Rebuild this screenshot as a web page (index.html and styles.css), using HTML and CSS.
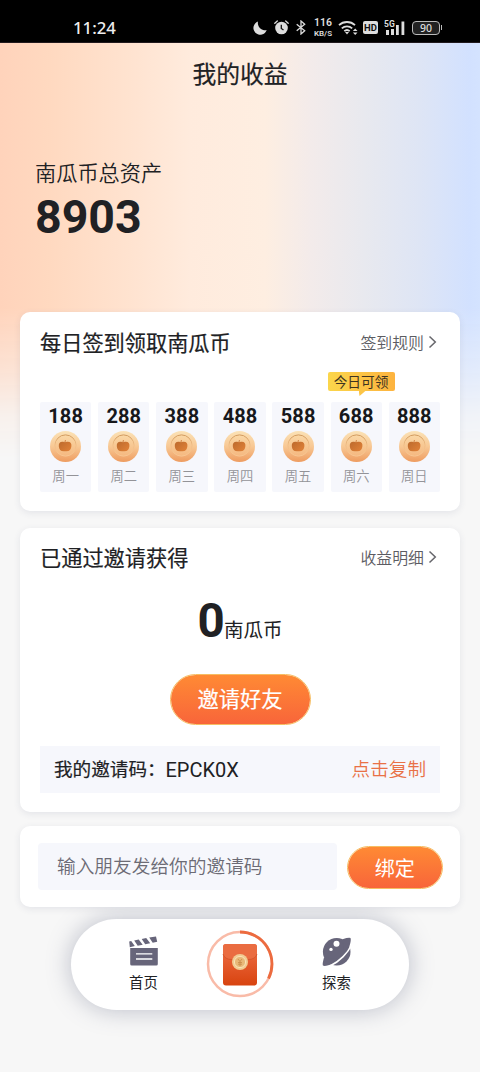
FILE: index.html
```html
<!DOCTYPE html>
<html lang="zh-CN">
<head>
<meta charset="utf-8">
<title>我的收益</title>
<link rel="stylesheet" href="styles.css">
</head>
<body>
<svg class="defs" width="0" height="0" aria-hidden="true">
  <defs>
    <linearGradient id="coinFill" x1="0" y1="0" x2="0" y2="1"><stop offset="0" stop-color="#fbe2b6"/><stop offset=".5" stop-color="#f8c894"/><stop offset="1" stop-color="#ee9c60"/></linearGradient>
    <linearGradient id="coinInner" x1="0" y1="0" x2="0" y2="1"><stop offset="0" stop-color="#fad8a6"/><stop offset="1" stop-color="#f5b880"/></linearGradient>
    <linearGradient id="coinRim" x1="0" y1="0" x2="0" y2="1"><stop offset="0" stop-color="#d09a5e"/><stop offset=".45" stop-color="#efbd86"/><stop offset="1" stop-color="#f8c692"/></linearGradient>
    <linearGradient id="pumpkin" x1="0" y1="0" x2="1" y2="1"><stop offset="0" stop-color="#b9682c"/><stop offset="1" stop-color="#e28238"/></linearGradient>
    <symbol id="coin" viewBox="0 0 31 31">
      <circle cx="15.5" cy="15.5" r="15.5" fill="url(#coinFill)"/>
      <circle cx="15.5" cy="14.500" r="10.600" fill="url(#coinInner)" stroke="url(#coinRim)" stroke-width="1"/>
      <path d="M14.600 11.200c-.1-.9.100-1.700.5-2.200l.8.300c-.4.5-.5 1.100-.4 1.900 4.500-1.200 6.200.8 5.900 4-.3 3.500-2.200 5.600-6.300 5-4.200.6-6.100-1.500-6.300-5-.2-3.200 1.500-5.200 5.800-4z" fill="url(#pumpkin)"/>
    </symbol>
  </defs>
</svg>
<div class="phone">
  <header class="status">
    <span class="clock">11:24</span>
    <svg class="moon" width="14" height="14" viewBox="0 0 14 14"><path d="M5 .5A6.800 6.800 0 1 0 13.700 9 7.200 7.200 0 0 1 5 .5z" fill="#ddd"/></svg>
    <svg class="alarm" width="15" height="15" viewBox="0 0 15 15"><circle cx="7.500" cy="8" r="6.300" fill="#ddd"/><path d="M.8 3.200L3.300 1M14.200 3.200L11.700 1" stroke="#ddd" stroke-width="1.300" stroke-linecap="round"/><path d="M7.300 4.800v3.700l2.200 1.500" fill="none" stroke="#111" stroke-width="1.300"/></svg>
    <svg class="bt" width="10" height="15" viewBox="0 0 10 15"><path d="M.7 4.200l8 6.600L5 14V1l3.700 3.200-8 6.600" fill="none" stroke="#ddd" stroke-width="1.300"/></svg>
    <span class="speed"><b>116</b><i>KB/S</i></span>
    <svg class="wifi" width="20" height="15" viewBox="0 0 20 15"><path d="M1 5.200a11.600 11.600 0 0 1 16 0M3.800 8.300a7.700 7.700 0 0 1 10.400 0M6.300 11.200a4 4 0 0 1 5.400 0" fill="none" stroke="#ddd" stroke-width="1.800"/><path d="M7 12h4l-2 2.500z" fill="#ddd"/><path d="M17.200 8.500l2.300 2.500h-4.600zM17.200 15l2.300-2.500h-4.600z" fill="#ddd"/></svg>
    <span class="hd">HD</span>
    <svg class="signal" width="21" height="16" viewBox="0 0 21 16"><g fill="#ddd"><rect x="2" y="10" width="3" height="5"/><rect x="7" y="9" width="3" height="6"/><rect x="12" y="5" width="2.800" height="10"/><rect x="17.500" y="1.500" width="2.800" height="13.500"/></g><text x="0" y="7.300">5G</text></svg>
    <span class="battery">90</span>
  </header>
  <div class="backdrop"></div>
  <h1 class="title">我的收益</h1>
  <section class="assets">
    <div class="assets-label">南瓜币总资产</div>
    <div class="assets-value">8903</div>
  </section>
  <main class="cards">
    <section class="card checkin">
      <div class="card-head"><h2>每日签到领取南瓜币</h2><a class="more">签到规则<svg width="9" height="14" viewBox="0 0 9 14"><path d="M1.500 1.500L7.300 7l-5.800 5.500"/></svg></a></div>
      <div class="days">
        <div class="day"><b>188</b><svg class="coin"><use href="#coin"/></svg><span>周一</span></div>
        <div class="day"><b>288</b><svg class="coin"><use href="#coin"/></svg><span>周二</span></div>
        <div class="day"><b>388</b><svg class="coin"><use href="#coin"/></svg><span>周三</span></div>
        <div class="day"><b>488</b><svg class="coin"><use href="#coin"/></svg><span>周四</span></div>
        <div class="day"><b>588</b><svg class="coin"><use href="#coin"/></svg><span>周五</span></div>
        <div class="day"><em class="tip">今日可领</em><b>688</b><svg class="coin"><use href="#coin"/></svg><span>周六</span></div>
        <div class="day"><b>888</b><svg class="coin"><use href="#coin"/></svg><span>周日</span></div>
      </div>
    </section>
    <section class="card invite">
      <div class="card-head"><h2>已通过邀请获得</h2><a class="more">收益明细<svg width="9" height="14" viewBox="0 0 9 14"><path d="M1.500 1.500L7.300 7l-5.800 5.500"/></svg></a></div>
      <div class="earned"><b>0</b><span>南瓜币</span></div>
      <button class="pill invite-btn">邀请好友</button>
      <div class="code"><span class="code-label">我的邀请码：</span><span class="code-value">EPCK0X</span><a class="copy">点击复制</a></div>
    </section>
    <section class="card bind">
      <div class="field">输入朋友发给你的邀请码</div>
      <button class="pill bind-btn">绑定</button>
    </section>
  </main>
  <nav class="tabs">
    <a class="tab">
      <svg width="30" height="30" viewBox="0 0 30 30"><path d="M1.200 11h27.600V27q0 1.500-1.500 1.500H2.700q-1.500 0-1.500-1.500z" fill="#67657a"/><path d="M.2 4.500l2-.4L5.800 9l-5 1.200zM5.200 3.500l4.500-.9 4 5.200-5 1zM12.700 2l4.500-.9 4 5.200-5 1zM20.200.6L27 -.6l1.200 5.400-4.500.9z" fill="#67657a"/><path d="M7 16.800h16.300M7 22h16.300" stroke="#fff" stroke-width="1.300"/></svg>
      <span>首页</span>
    </a>
    <a class="wallet">
      <svg width="68" height="68" viewBox="0 0 68 68">
        <defs><linearGradient id="packet" x1="0" y1="0" x2="0" y2="1"><stop offset="0" stop-color="#ef7048"/><stop offset="1" stop-color="#d8430f"/></linearGradient></defs>
        <circle cx="34" cy="34" r="32" fill="none" stroke="#f9bba8" stroke-width="2.500"/>
        <path d="M34 2A32 32 0 0 1 62.500 48.500" fill="none" stroke="#ec6b3f" stroke-width="2.800"/>
        <rect x="17" y="14" width="34" height="41.500" rx="3" fill="url(#packet)"/>
        <path d="M17 17q0-3 3-3h28q3 0 3 3v7q-1.500 5.500-9 5.500H26q-7.500 0-9-5.500z" fill="#ea6c41"/>
        <path d="M17 24q1.500 5.500 9 5.500h16q7.500 0 9-5.500" fill="none" stroke="#cf5329" stroke-width=".8"/>
        <circle cx="34" cy="32" r="8" fill="#f1cb92"/><circle cx="34" cy="32" r="5.600" fill="#e8b878" stroke="#fae3b8" stroke-width="1"/>
        <path d="M32 29l2 2.500 2-2.500M34 31.500V36M32 32.500h4M32 34.200h4" fill="none" stroke="#c88a4a" stroke-width=".8"/>
      </svg>
    </a>
    <a class="tab">
      <svg width="30" height="30" viewBox="0 0 30 30"><circle cx="14.700" cy="14.700" r="13.800" fill="#67657a"/><path d="M20.500 2.200Q26.500.4 28.500 1q.9 2.200-1 8L22 15zM2 20.500Q.2 26.800.9 28.600q2.200.9 8-1L15 22z" fill="#67657a"/><path d="M29.500 8C26 15.500 18 24.500 7.500 29.300" fill="none" stroke="#fff" stroke-width="1.600"/><circle cx="14.500" cy="6.800" r="3" fill="#fff"/><circle cx="9" cy="12.400" r="1.700" fill="#fff"/></svg>
      <span>探索</span>
    </a>
  </nav>
</div>
</body>
</html>
```
FILE: styles.css
```css
* { box-sizing: border-box; }
body { margin: 0; background: #f7f7f7; color: #202124; font-family: Roboto, "Noto Sans CJK SC", sans-serif; }
h1, h2 { margin: 0; font-weight: 400; -webkit-text-stroke: .2px currentColor; }
button { border: 0; font-family: inherit; padding: 0; }
.defs { position: absolute; }
.phone { position: relative; isolation: isolate; width: 480px; height: 1072px; overflow: hidden; background: #f7f7f7; }

.status { height: 43px; background: #000; display: flex; align-items: center; padding: 13px 0 0 73px; color: #ddd; border-bottom: 1px solid #211a1e; }
.clock { width: 180px; font: 500 16.800px/20px "Noto Sans", sans-serif; color: #eee; }
.moon { margin-right: 7px; }
.alarm { margin-right: 7px; }
.bt { margin-right: 7px; }
.speed { display: flex; flex-direction: column; align-items: center; gap: 1px; width: 20px; font-family: Roboto, sans-serif; margin-right: 5px; }
.speed b { font-size: 10.500px; line-height: 10px; font-weight: 600; }
.speed i { font-style: normal; font-size: 8px; line-height: 9px; font-weight: 600; }
.wifi { margin-right: 5px; }
.hd { width: 15px; height: 13px; border-radius: 2px; background: #ddd; color: #111; font: 700 9.500px/13px Roboto, sans-serif; text-align: center; margin-right: 6px; }
.signal { margin-right: 7px; }
.signal text { font: 700 8.500px Roboto, sans-serif; fill: #ddd; }
.battery { position: relative; width: 28px; height: 14px; border: 1.500px solid #bbb; border-radius: 4px; background: #222; font: 500 10.500px/12px "Noto Sans", sans-serif; text-align: center; color: #ddd; }
.battery::after { content: ""; position: absolute; right: -3px; top: 3px; width: 1.500px; height: 5px; background: #bbb; }

.backdrop { position: absolute; z-index: -1; left: 0; top: 43px; width: 480px; height: 420px; background: linear-gradient(90deg, #ffd3bb 0, #ffd9c0 50px, #ffe3d0 130px, #ffebdd 190px, #feeee1 265px, #f3ebea 310px, #e8e9ef 365px, #dee5f5 420px, #d2e1ff 470px, #d4e3ff 480px); -webkit-mask-image: linear-gradient(#000 0, #000 265px, rgba(0,0,0,.6) 325px, rgba(0,0,0,.18) 372px, transparent 415px); mask-image: linear-gradient(#000 0, #000 265px, rgba(0,0,0,.6) 325px, rgba(0,0,0,.18) 372px, transparent 415px); }
.title { text-align: center; font-size: 23.800px; line-height: 34px; padding-top: 15px; }
.assets { padding: 66px 35px 0; height: 220px; }
.assets-label { font-size: 21.200px; line-height: 32px; font-weight: 350; }
.assets-value { font-size: 46.500px; line-height: 54px; font-weight: 700; }

.cards { padding: 0 20px; }
.card { background: #fff; border-radius: 10px; box-shadow: 0 2px 7px rgba(60, 70, 110, .1); }
.card-head { display: flex; justify-content: space-between; align-items: center; height: 30px; }
.card-head h2 { font-size: 21.200px; line-height: 30px; padding-top: 2px; }
.more { display: flex; align-items: center; gap: 4px; font-size: 15.900px; font-weight: 350; color: #5c5c62; padding-right: 3px; }
.more path { fill: none; stroke: #66666b; stroke-width: 1.500; }

.checkin { height: 199px; padding: 15px 20px 0; }
.checkin h2 { padding-top: 3px; }
.days { display: grid; grid-template-columns: repeat(7, 1fr); gap: 6.800px; padding-top: 44.500px; }
.day { position: relative; height: 90px; padding-top: 3px; background: #f6f7fc; border-radius: 2px; display: flex; flex-direction: column; align-items: center; }
.day b { font-size: 20px; line-height: 22px; letter-spacing: .1px; color: #17181b; }
.coin { width: 31px; height: 31px; margin-top: 4px; }
.day span { font-size: 13.300px; line-height: 20px; margin-top: 5px; font-weight: 350; color: #939398; }
.tip { position: absolute; left: -3px; top: -29.500px; width: 67px; height: 19px; border-radius: 2px; background: linear-gradient(90deg, #fbd64b, #fdb33f); font: 400 13.700px/19px "Noto Sans CJK SC", sans-serif; text-align: center; white-space: nowrap; color: #3d3420; }
.tip::after { content: ""; position: absolute; left: 31px; top: 18px; width: 8px; height: 6px; background: #fcc547; clip-path: polygon(0 0, 100% 0, 12% 100%); }

.invite { margin-top: 17px; height: 284px; padding: 14px 20px 0; }
.invite h2 { padding-top: 3px; }
.earned { display: flex; justify-content: center; align-items: baseline; height: 52px; margin-top: 23px; }
.earned b { font-size: 47.500px; line-height: 52px; width: 27px; text-align: center; }
.earned span { font-size: 19.500px; line-height: 28px; margin-left: -.5px; }
.pill { display: block; border: 1.500px solid #f6bd62; color: #fff; background: linear-gradient(#ff8a34, #f8653a) padding-box; }
.invite-btn { width: 141px; height: 51px; border-radius: 26px; margin: 27px auto 0; font-size: 21.300px; line-height: 47px; font-weight: 400; -webkit-text-stroke: .2px #fff; }
.code { display: flex; align-items: center; height: 47px; margin-top: 21px; padding: 0 14px; background: #f6f7fc; font-size: 18.600px; line-height: 28px; }
.code-label { -webkit-text-stroke: .2px currentColor; width: 111.500px; white-space: nowrap; }
.code-value { font-size: 20px; flex: 1; }
.copy { color: #e97146; font-weight: 350; }

.bind { position: relative; z-index: 2; display: flex; align-items: center; justify-content: space-between; margin-top: 14px; height: 81px; padding: 0 17.500px 0 18px; }
.field { width: 298.500px; height: 47px; border-radius: 4px; background: #f6f7fc; color: #6c6b75; padding-left: 19px; font-size: 18.700px; font-weight: 350; line-height: 49px; }
.bind-btn { width: 95.500px; height: 43px; border-radius: 22px; font-size: 20px; line-height: 38px; padding-top: 2px; margin-top: 2px; }

.tabs { position: relative; z-index: 1; width: 338px; height: 91px; margin: 11.500px auto 0 71px; background: #fff; border-radius: 46px; box-shadow: 0 0 24px rgba(85, 92, 120, .38); display: flex; padding: 0 42px; }
.tab { width: 61px; padding-top: 18px; display: flex; flex-direction: column; align-items: center; font-size: 14.400px; line-height: 20px; }
.tab svg { flex: none; width: 30px; height: 30px; overflow: visible; }
.tab span { margin-top: 7px; }
.wallet { flex: 1; display: flex; justify-content: center; align-items: center; }
```
